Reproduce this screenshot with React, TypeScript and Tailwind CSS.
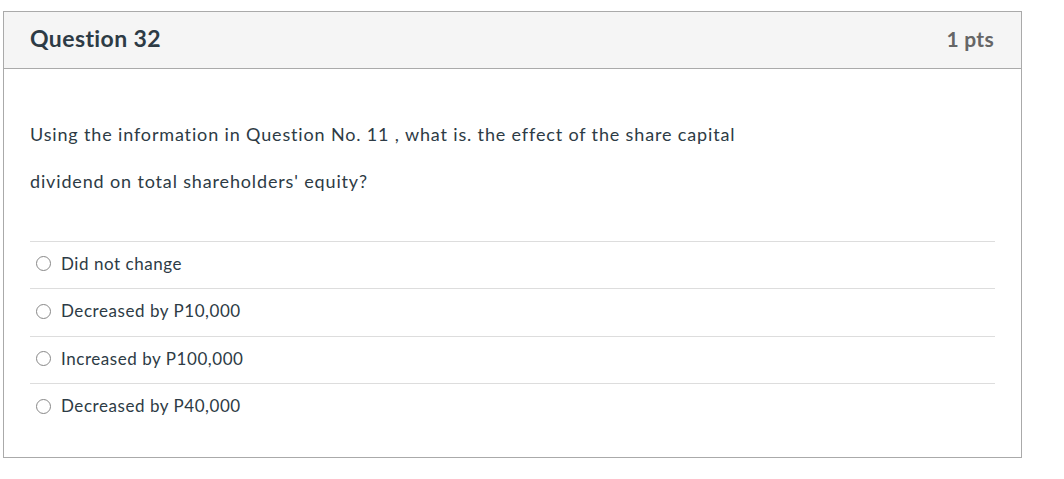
const answers = [
  'Did not change',
  'Decreased by P10,000',
  'Increased by P100,000',
  'Decreased by P40,000',
];

export default function App() {
  return (
    <div
      className="min-h-screen bg-white pt-[11px] pl-[3px]"
      style={{ fontFamily: 'Lato, "Open Sans", sans-serif' }}
    >
      <div className="w-[1019px] border border-[#aaaaaa] bg-white">
        {/* Header */}
        <div className="flex h-[57px] items-center justify-between border-b border-[#aaaaaa] bg-[#f5f5f5] pb-[3px] pl-[26px] pr-[27px]">
          <h2 className="text-[23px] font-bold tracking-[0.4px] text-[#2d3b45]">Question 32</h2>
          <div className="text-[21px] font-bold tracking-[0.3px] text-[#666666]">1 pts</div>
        </div>

        {/* Body */}
        <div className="px-[26px] pt-[42px] pb-[26px]">
          <div className="text-[18px] leading-[47px] tracking-[0.85px] text-[#2d3b45]">
            <p>Using the information in Question No. 11 , what is. the effect of the share capital</p>
            <p>dividend on total shareholders' equity?</p>
          </div>

          <div className="mt-[36px] border-t border-[#dddddd]">
            {answers.map((a, i) => (
              <label
                key={a}
                className={`flex items-center pb-[3px] ${i === 1 ? 'h-[48px]' : 'h-[47px]'} ${
                  i < answers.length - 1 ? 'border-b border-[#dddddd]' : ''
                }`}
              >
                <span className="ml-[6px] mr-[10px] h-[15px] w-[15px] rounded-full border border-[#888888] bg-white" />
                <span className="text-[17px] tracking-[0.55px] text-[#2d3b45]">{a}</span>
              </label>
            ))}
          </div>
        </div>
      </div>
    </div>
  );
}
